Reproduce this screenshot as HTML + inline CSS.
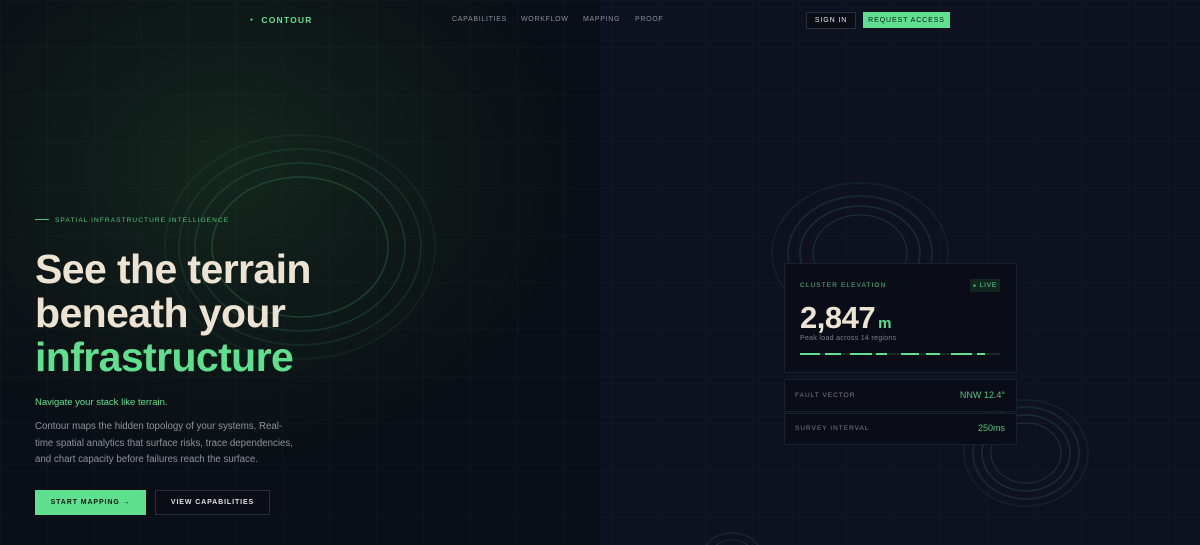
<!DOCTYPE html>
<html><head><meta charset="utf-8"><style>
*{margin:0;padding:0;box-sizing:border-box}
html,body{width:1200px;height:545px;overflow:hidden}
body{background:#0b0e19;font-family:"Liberation Sans",sans-serif;position:relative}
.left{position:absolute;left:0;top:0;width:600px;height:545px;background:radial-gradient(ellipse 360px 300px at 230px 170px,#13271e 0%,#0f1a18 45%,#0a0e16 100%)}
.right{position:absolute;left:600px;top:0;width:600px;height:545px;background:#0d1120}
.grid{position:absolute;inset:0;background-image:linear-gradient(rgba(255,255,255,.02) 1px,transparent 1px),linear-gradient(90deg,rgba(255,255,255,.02) 1px,transparent 1px);background-size:47px 47px}
svg.bg{position:absolute;left:0;top:0}
.t{position:absolute;white-space:nowrap}
.nav{font-size:7px;letter-spacing:.7px;color:#8a8f98;top:16px}
.btn{position:absolute;font-size:7px;letter-spacing:.9px;display:flex;align-items:center;justify-content:center;white-space:nowrap}
h1{position:absolute;left:35px;top:247px;font-size:41px;line-height:44px;font-weight:700;color:#ece3d2;letter-spacing:-.6px}
h1 span{color:#5fe08f}
.card{position:absolute;background:#0a0d17;border:1px solid #1a2028}
</style></head><body>
<div class="left"></div><div class="right"></div><div class="grid"></div>
<svg class="bg" width="1200" height="545" fill="none">
<g stroke="#2f7a50">
<ellipse cx="300" cy="247" rx="88" ry="70" stroke-opacity=".4" stroke-width="1.5"/>
<ellipse cx="300" cy="247" rx="105" ry="84" stroke-opacity=".3" stroke-width="1.5"/>
<ellipse cx="300" cy="247" rx="121" ry="98" stroke-opacity=".2" stroke-width="2"/>
<ellipse cx="300" cy="247" rx="135" ry="112" stroke-opacity=".12" stroke-width="2"/>
</g>
<g stroke="#2a5a4a">
<ellipse cx="860" cy="253" rx="47" ry="38" stroke-opacity=".5"/>
<ellipse cx="860" cy="253" rx="60" ry="47" stroke-opacity=".4" stroke-width="1.5"/>
<ellipse cx="860" cy="253" rx="72" ry="57" stroke-opacity=".3" stroke-width="2"/>
<ellipse cx="860" cy="253" rx="88" ry="70" stroke-opacity=".2" stroke-width="2"/>
<ellipse cx="1026" cy="453" rx="35" ry="30" stroke-opacity=".5"/>
<ellipse cx="1026" cy="453" rx="44" ry="38" stroke-opacity=".4" stroke-width="1.5"/>
<ellipse cx="1026" cy="453" rx="53" ry="46" stroke-opacity=".3" stroke-width="2"/>
<ellipse cx="1026" cy="453" rx="62" ry="53" stroke-opacity=".2" stroke-width="2"/>
<ellipse cx="732" cy="560" rx="23" ry="20" stroke-opacity=".4"/>
<ellipse cx="732" cy="560" rx="31" ry="27" stroke-opacity=".3" stroke-width="1.5"/>
</g>
</svg>
<div class="t" style="left:250px;top:15px;font-size:8.5px;letter-spacing:1.2px;color:#5fe08f;font-weight:700"><span style="font-size:5px;vertical-align:2px">●</span>&nbsp;&nbsp;CONTOUR</div>
<div class="t nav" style="left:452px">CAPABILITIES</div>
<div class="t nav" style="left:521px">WORKFLOW</div>
<div class="t nav" style="left:583px">MAPPING</div>
<div class="t nav" style="left:635px">PROOF</div>
<div class="btn" style="left:806px;top:12px;width:50px;height:17px;border:1px solid #2a2f3a;color:#e6e6e6;background:#0a0d16">SIGN IN</div>
<div class="btn" style="left:863px;top:12px;width:87px;height:16px;background:#5fe08f;color:#0b1a12">REQUEST ACCESS</div>
<div class="t" style="left:35px;top:217px;font-size:6.5px;letter-spacing:1.1px;color:#4fc47d"><span style="display:inline-block;width:14px;height:1px;background:#4fc47d;vertical-align:2px;margin-right:6px"></span>SPATIAL INFRASTRUCTURE INTELLIGENCE</div>
<h1>See the terrain<br>beneath your<br><span>infrastructure</span></h1>
<div class="t" style="left:35px;top:397px;font-size:9.5px;color:#5fe08f">Navigate your stack like terrain.</div>
<div class="t" style="left:35px;top:419px;font-size:9.7px;line-height:16.5px;color:#8e9198">Contour maps the hidden topology of your systems. Real-<br>time spatial analytics that surface risks, trace dependencies,<br>and chart capacity before failures reach the surface.</div>
<div class="btn" style="left:35px;top:490px;width:111px;height:25px;background:#5fe08f;color:#0b1a12;font-weight:700">START MAPPING →</div>
<div class="btn" style="left:155px;top:490px;width:115px;height:25px;border:1px solid #2a2f3a;color:#e0e0e0;background:#0a0d16;font-weight:700">VIEW CAPABILITIES</div>
<div class="card" style="left:784px;top:263px;width:233px;height:110px"></div>
<div class="t" style="left:800px;top:282px;font-size:6.5px;letter-spacing:1.1px;color:#4fc47d">CLUSTER ELEVATION</div>
<div class="t" style="left:970px;top:279px;width:30px;height:13px;background:#12251e;font-size:6.5px;letter-spacing:.8px;color:#5fe08f;display:flex;align-items:center;justify-content:center"><span style="font-size:5px;margin-right:3px">●</span>LIVE</div>
<div class="t" style="left:800px;top:300px;font-size:31px;font-weight:700;color:#ece3d2;letter-spacing:-.5px">2,847<span style="font-size:15px;color:#5fe08f;margin-left:3px">m</span></div>
<div class="t" style="left:800px;top:335px;font-size:7px;letter-spacing:.3px;color:#7a7f88">Peak load across 14 regions</div>
<svg class="bg" width="1200" height="545"><rect x="800" y="353" width="200" height="2" fill="#1a2a26"/>
<g fill="#5fe08f"><rect x="800" y="353" width="20" height="2"/><rect x="825" y="353" width="16" height="2"/><rect x="850" y="353" width="22" height="2"/><rect x="876" y="353" width="11" height="2"/><rect x="901" y="353" width="18" height="2"/><rect x="926" y="353" width="14" height="2"/><rect x="951" y="353" width="21" height="2"/><rect x="977" y="353" width="8" height="2"/></g></svg>
<div class="card" style="left:784px;top:379px;width:233px;height:33px"></div>
<div class="card" style="left:784px;top:413px;width:233px;height:32px"></div>
<div class="t" style="left:795px;top:392px;font-size:6.5px;letter-spacing:1px;color:#7a7f88">FAULT VECTOR</div>
<div class="t" style="right:195px;top:390px;font-size:9px;color:#4fc47d">NNW 12.4°</div>
<div class="t" style="left:795px;top:425px;font-size:6.5px;letter-spacing:1px;color:#7a7f88">SURVEY INTERVAL</div>
<div class="t" style="right:195px;top:423px;font-size:9px;color:#4fc47d">250ms</div>
</body></html>
